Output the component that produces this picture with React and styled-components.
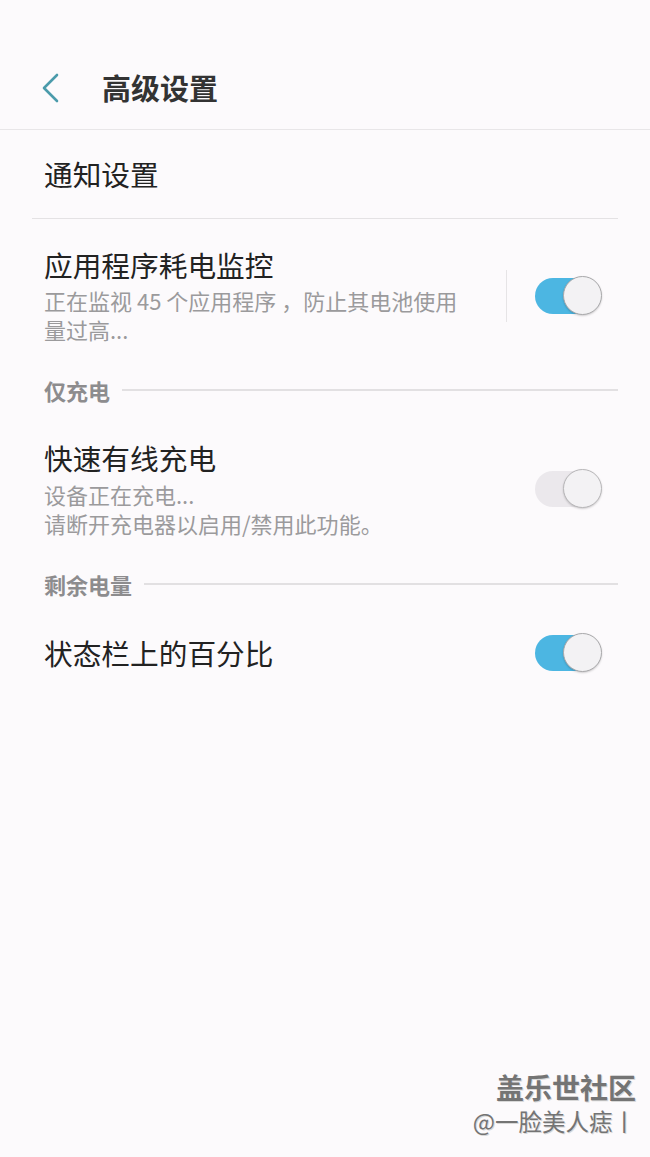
import React from "react"
import styled, { createGlobalStyle } from "styled-components"

const GlobalStyle = createGlobalStyle`
  html, body {
    margin: 0;
    padding: 0;
    background: #fcfafc;
  }
  body {
    font-family: "Noto Sans CJK SC", "Noto Sans", sans-serif;
  }
`

const Page = styled.div`
  position: relative;
  width: 650px;
  min-height: 1157px;
  background: #fcfafc;
  overflow: hidden;
`

const Header = styled.div`
  display: flex;
  align-items: center;
  height: 81px;
  padding-top: 48px;
  border-bottom: 1px solid #e8e6e8;
`

const BackButton = styled.div`
  display: flex;
  align-items: center;
  justify-content: center;
  width: 30px;
  height: 40px;
  margin-left: 36px;
  margin-right: 36px;
  margin-bottom: 2px;
`

const Title = styled.h1`
  margin: 0 0 3px;
  font-size: 29px;
  font-weight: 700;
  color: #333;
  line-height: 36px;
`

const Row = styled.div`
  display: flex;
  align-items: center;
  margin: 0 32px;
  padding: ${(p) => p.pad || "0"};
  padding-left: 12px;
  padding-right: 16px;
  min-height: ${(p) => p.h || "auto"};
  border-bottom: ${(p) => (p.divider ? "1px solid #e4e2e4" : "none")};
  box-sizing: border-box;
`

const TextCol = styled.div`
  flex: 1;
  display: flex;
  flex-direction: column;
`

const ItemTitle = styled.div`
  font-size: 28.7px;
  line-height: 36px;
  color: #222;
`

const Sub = styled.div`
  width: 432px;
  margin-top: ${(p) => p.mt || "3px"};
  font-size: 22px;
  line-height: 29px;
  color: #9b9a9c;
`

const VDivider = styled.div`
  width: 1px;
  height: 52px;
  background: #e6e4e6;
  margin-right: 28px;
`

const Track = styled.div`
  position: relative;
  width: 64px;
  height: 36px;
  border-radius: 18px;
  background: ${(p) => (p.on ? "#4cb6e2" : "#ebe8ec")};
  margin-right: 3px;
`

const Thumb = styled.div`
  position: absolute;
  right: -3px;
  top: -2px;
  width: 39px;
  height: 39px;
  border-radius: 50%;
  background: #f3f2f4;
  box-sizing: border-box;
  border: 1.5px solid ${(p) => (p.on ? "#a9a9ab" : "#b8b7b9")};
  box-shadow: 0 1px 2px rgba(0, 0, 0, 0.18);
`

const Section = styled.div`
  display: flex;
  align-items: center;
  height: 40px;
  margin: 0 32px;
  padding-left: 12px;
`

const SectionLabel = styled.span`
  font-size: 22px;
  font-weight: 700;
  color: #8d8c8e;
  margin-right: 12px;
`

const SectionLine = styled.div`
  flex: 1;
  height: 2px;
  background: #e2e0e2;
`

const Watermark = styled.div`
  position: absolute;
  right: 12px;
  bottom: 20px;
  display: flex;
  flex-direction: column;
  align-items: flex-end;
  color: #747474;
  text-shadow: 1px 1px 0 #d8d8d8;
`

const MarkTitle = styled.div`
  font-size: 28px;
  font-weight: 700;
  line-height: 36px;
  margin-right: 2px;
`

const MarkUser = styled.div`
  font-size: 23.5px;
  line-height: 32px;
  margin-right: 2px;
`

const Toggle = ({ on }) => (
  <Track on={on ? 1 : 0}>
    <Thumb on={on ? 1 : 0} />
  </Track>
)

const App = () => {
  return (
    <Page>
      <GlobalStyle />
      <Header>
        <BackButton>
          <svg width="20" height="32" viewBox="0 0 20 32">
            <polyline
              points="16,3 3,16 16,29"
              fill="none"
              stroke="#4b9bab"
              strokeWidth="2.6"
              strokeLinecap="round"
              strokeLinejoin="round"
            />
          </svg>
        </BackButton>
        <Title>高级设置</Title>
      </Header>

      <Row h="89px" divider>
        <ItemTitle>通知设置</ItemTitle>
      </Row>

      <Row pad="28px 0 26px">
        <TextCol>
          <ItemTitle>应用程序耗电监控</ItemTitle>
          <Sub>正在监视 45 个应用程序 ，防止其电池使用量过高...</Sub>
        </TextCol>
        <VDivider />
        <Toggle on />
      </Row>

      <Section>
        <SectionLabel>仅充电</SectionLabel>
        <SectionLine />
      </Section>

      <Row pad="30px 0 26px">
        <TextCol>
          <ItemTitle>快速有线充电</ItemTitle>
          <Sub mt="4px">
            设备正在充电...
            <br />
            请断开充电器以启用/禁用此功能。
          </Sub>
        </TextCol>
        <Toggle />
      </Row>

      <Section>
        <SectionLabel>剩余电量</SectionLabel>
        <SectionLine />
      </Section>

      <Row pad="31px 0 20px">
        <TextCol>
          <ItemTitle>状态栏上的百分比</ItemTitle>
        </TextCol>
        <Toggle on />
      </Row>

      <Watermark>
        <MarkTitle>盖乐世社区</MarkTitle>
        <MarkUser>@一脸美人痣丨</MarkUser>
      </Watermark>
    </Page>
  )
}

export default App
